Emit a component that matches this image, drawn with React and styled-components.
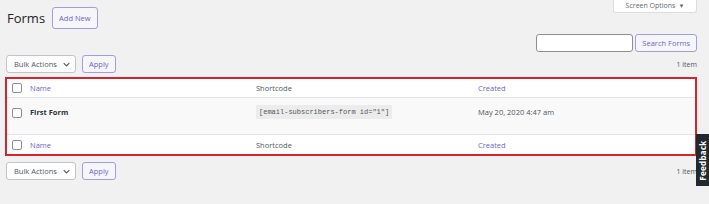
import styled, { createGlobalStyle } from "styled-components";

const Global = createGlobalStyle`
  html, body {
    margin: 0;
    padding: 0;
    background: #f1f1f1;
    font-family: "Open Sans", "Liberation Sans", sans-serif;
    color: #3c434a;
  }
`

const Page = styled.div`
  padding: 0 12px 0 5px;
  width: 709px;
  box-sizing: border-box;
`

const Top = styled.div`
  display: flex;
  justify-content: space-between;
  align-items: flex-start;
`

const TitleGroup = styled.div`
  display: flex;
  align-items: center;
  gap: 7px;
  padding: 7px 0 0 2px;
`

const Title = styled.h1`
  margin: 0;
  font-size: 13px;
  font-weight: 400;
  color: #1d2327;
  line-height: 22px;
`

const Button = styled.button`
  font-family: inherit;
  font-size: ${p => p.$size || 7.5}px;
  color: #6b64c9;
  background: #f6f6fa;
  border: 1px solid #a39cdf;
  border-radius: 3px;
  height: ${p => p.$h || 18}px;
  padding: 0 ${p => p.$px || 6}px;
  cursor: pointer;
  box-sizing: border-box;
`

const ScreenOptions = styled.div`
  width: 84px;
  height: 13px;
  background: #fff;
  border: 1px solid #dcdcde;
  border-top: none;
  border-radius: 0 0 3px 3px;
  font-size: 7px;
  color: #646970;
  display: flex;
  align-items: flex-end;
  justify-content: center;
  gap: 3px;
  box-sizing: border-box;
  line-height: 1;
  padding-bottom: 3px;
`

const SearchRow = styled.div`
  display: flex;
  justify-content: flex-end;
  gap: 2px;
  margin-top: 5px;
`

const SearchInput = styled.input`
  width: 97px;
  height: 18px;
  box-sizing: border-box;
  border: 1px solid #8c8f94;
  border-radius: 3px;
  background: #fff;
`

const TableNav = styled.div`
  display: flex;
  justify-content: space-between;
  align-items: center;
  margin-top: ${p => p.$mt || 3}px;
  padding-left: 1px;
`

const Actions = styled.div`
  display: flex;
  align-items: center;
  gap: 6px;
`

const Select = styled.div`
  width: 70px;
  height: 18px;
  box-sizing: border-box;
  background: #fff;
  border: 1px solid #c3c4c7;
  border-radius: 3px;
  font-size: 7.5px;
  color: #50575e;
  display: flex;
  align-items: center;
  justify-content: space-between;
  padding: 0 5px 0 7px;
`

const Count = styled.span`
  font-size: 7px;
  color: #50575e;
`

const Table = styled.div`
  margin-top: 4px;
  border: 2px solid #d7232d;
  background: #fff;
`

const Row = styled.div`
  display: grid;
  grid-template-columns: 23px 226px 222px 1fr;
  align-items: ${p => (p.$body ? "start" : "center")};
  height: ${p => p.$h}px;
  background: ${p => (p.$body ? "#f9f9f9" : "#fff")};
  border-top: ${p => (p.$line ? "1px solid #e2e4e7" : "none")};
  padding-top: ${p => (p.$body ? 7 : 0)}px;
  box-sizing: border-box;
  font-size: 7.5px;
`

const CheckCell = styled.div`
  padding-left: 5px;
  display: flex;
  align-items: center;
  padding-top: ${p => (p.$body ? 3 : 0)}px;
`

const Check = styled.span`
  width: 10px;
  height: 10px;
  box-sizing: border-box;
  border: 1px solid #8c8f94;
  border-radius: 2px;
  background: #fff;
`

const Link = styled.span`
  color: #6b64c9;
`

const Cell = styled.div`
  color: ${p => (p.$bold ? "#2c3338" : "#50575e")};
  padding-top: ${p => (p.$pt || 0)}px;
  font-weight: ${p => (p.$bold ? 700 : 400)};
`

const Code = styled.code`
  display: inline-block;
  font-family: "Liberation Mono", "DejaVu Sans Mono", monospace;
  font-size: 7px;
  color: #50575e;
  background: #ececec;
  padding: 3px 3px;
`

const Feedback = styled.div`
  position: fixed;
  right: 0;
  top: 134px;
  width: 13px;
  height: 52px;
  background: #23282d;
  color: #fff;
  display: flex;
  align-items: center;
  justify-content: center;
`

const FeedbackText = styled.span`
  transform: rotate(-90deg);
  font-size: 8px;
  font-weight: 700;
  letter-spacing: 0.3px;
  white-space: nowrap;
`

const Chevron = () => (
  <svg width="7" height="5" viewBox="0 0 10 6">
    <path d="M1 1l4 4 4-4" fill="none" stroke="#50575e" strokeWidth="1.6" />
  </svg>
)

function Nav({ mt }) {
  return (
    <TableNav $mt={mt}>
      <Actions>
        <Select>
          Bulk Actions <Chevron />
        </Select>
        <Button $px={6}>Apply</Button>
      </Actions>
      <Count>1 item</Count>
    </TableNav>
  )
}

function HeadRow({ line }) {
  return (
    <Row $h={line ? 20 : 18} $line={line}>
      <CheckCell><Check /></CheckCell>
      <Cell><Link>Name</Link></Cell>
      <Cell>Shortcode</Cell>
      <Cell><Link>Created</Link></Cell>
    </Row>
  )
}

export default function App() {
  return (
    <Page>
      <Global />
      <Top>
        <TitleGroup>
          <Title>Forms</Title>
          <Button $h={22} $px={6}>Add New</Button>
        </TitleGroup>
        <ScreenOptions>
          Screen Options <span style={{ fontSize: "6px" }}>▼</span>
        </ScreenOptions>
      </Top>
      <SearchRow>
        <SearchInput />
        <Button $px={6}>Search Forms</Button>
      </SearchRow>
      <Nav mt={3} />
      <Table>
        <HeadRow />
        <Row $h={37} $body $line>
          <CheckCell $body><Check /></CheckCell>
          <Cell $bold $pt={2}>First Form</Cell>
          <Cell><Code>[email-subscribers-form id="1"]</Code></Cell>
          <Cell $pt={2}>May 20, 2020 4:47 am</Cell>
        </Row>
        <HeadRow line />
      </Table>
      <Nav mt={6} />
      <Feedback>
        <FeedbackText>Feedback</FeedbackText>
      </Feedback>
    </Page>
  )
}
